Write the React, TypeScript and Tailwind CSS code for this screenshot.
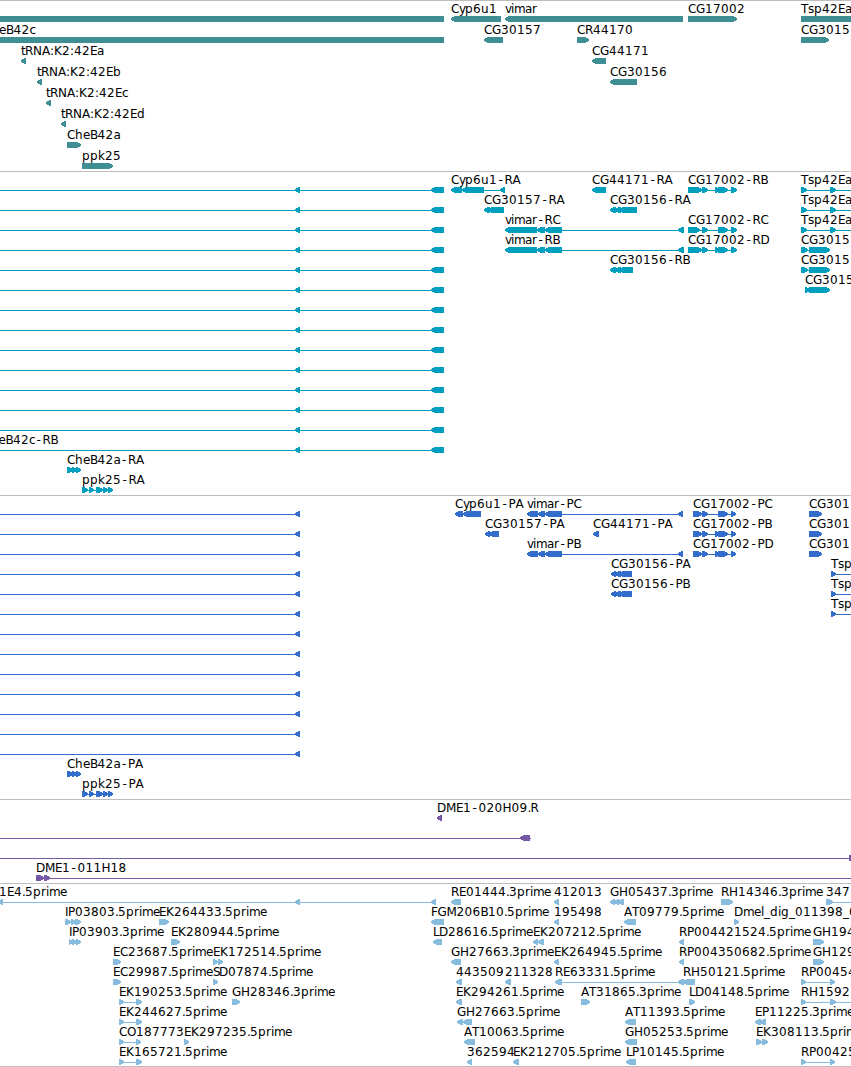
type Exon = [number, number];

type Feature = {
  row: number;
  label: string;
  dir: "l" | "r" | "none";
  exons: Exon[];
  // extent of the intron line, when there is one
  line?: Exon;
  labelX?: number;
};

type Track = {
  id: string;
  color: string;
  height: number;
  pitch: number;
  features: Feature[];
};

const WIDTH = 851;
const HEAD = 5;

// Advances for the 12px label font
const ADVANCE: Record<string, number> = {
  A: 8, B: 7.5, C: 8, D: 9, E: 7, F: 6.5, G: 9, H: 9, I: 3, K: 8, L: 6, M: 10,
  N: 9, O: 9, P: 7, R: 8, S: 6, T: 7, a: 7, b: 8, c: 6, d: 8, e: 7, g: 8,
  h: 8, i: 3, k: 7, l: 3, m: 11, p: 8, r: 5, s: 6, t: 4, u: 8, v: 6, y: 6,
  ".": 3, ":": 4, "-": 7.5, _: 6,
};

const f = (
  row: number,
  label: string,
  dir: Feature["dir"],
  exons: Exon[],
  line?: Exon,
  labelX?: number
): Feature => ({ row, label, dir, exons, line, labelX });

const rows = (count: number, make: (row: number) => Feature) =>
  Array.from({ length: count }, (_, i) => make(i));

const genes: Feature[] = [
  f(0, "", "none", [[0, 444]]),
  f(0, "Cyp6u1", "l", [[451, 501]]),
  f(0, "vimar", "l", [[505, 683]]),
  f(0, "CG17002", "r", [[688, 737]]),
  f(0, "Tsp42Ea", "none", [[801, 851]]),
  f(1, "eB42c", "none", [[0, 444]], undefined, -1),
  f(1, "CG30157", "l", [[484, 503]]),
  f(1, "CR44170", "r", [[577, 589]]),
  f(1, "CG3015", "r", [[801, 829]]),
  f(2, "tRNA:K2:42Ea", "l", [[21, 26]]),
  f(2, "CG44171", "l", [[592, 606]]),
  f(3, "tRNA:K2:42Eb", "l", [[37, 42]]),
  f(3, "CG30156", "l", [[610, 637]]),
  f(4, "tRNA:K2:42Ec", "l", [[46, 51]]),
  f(5, "tRNA:K2:42Ed", "l", [[61, 66]]),
  f(6, "CheB42a", "r", [[67, 81]]),
  f(7, "ppk25", "r", [[82, 113]]),
];

const cheExons: Exon[] = [[67, 73], [72, 77], [76, 81]];
const ppkExons: Exon[] = [[82, 88], [89, 94], [96, 101], [98, 103], [103, 108], [108, 113]];

const vimarRna: Exon[] = [[505, 537], [537, 545], [545, 562], [678, 684]];

const transcripts: Feature[] = [
  ...rows(14, (i) => f(i, i === 13 ? "eB42c-RB" : "", "l", [[295, 300], [431, 444]], [0, 444], -1.5)),
  f(14, "CheB42a-RA", "r", cheExons, [67, 81]),
  f(15, "ppk25-RA", "r", ppkExons, [82, 113]),
  f(0, "Cyp6u1-RA", "l", [[451, 462], [462, 484], [500, 505]], [451, 505]),
  f(0, "CG44171-RA", "l", [[592, 606]]),
  f(0, "CG17002-RB", "r", [[688, 702], [702, 708], [715, 720], [718, 728], [731, 737]], [688, 737]),
  f(0, "Tsp42Ea", "r", [[801, 807], [830, 836]], [801, 851]),
  f(1, "CG30157-RA", "l", [[484, 490], [488, 504]]),
  f(1, "CG30156-RA", "l", [[610, 616], [615, 621], [619, 637]]),
  f(1, "Tsp42Ea", "r", [[801, 807], [830, 836]], [801, 851]),
  f(2, "vimar-RC", "l", vimarRna, [505, 684]),
  f(2, "CG17002-RC", "r", [[688, 700], [702, 708], [718, 728], [731, 737]], [688, 737]),
  f(2, "Tsp42Ea", "r", [[801, 807], [830, 836]], [801, 851]),
  f(3, "vimar-RB", "l", vimarRna, [505, 684]),
  f(3, "CG17002-RD", "r", [[688, 702], [702, 708], [715, 720], [718, 728], [731, 737]], [688, 737]),
  f(3, "CG3015", "r", [[801, 808], [809, 830]], [801, 830]),
  f(4, "CG30156-RB", "l", [[610, 616], [615, 621], [619, 633]]),
  f(4, "CG3015", "r", [[801, 808], [809, 830]], [801, 830]),
  f(5, "CG3015", "r", [[805, 810], [809, 830]], [805, 830]),
];

const vimarCds: Exon[] = [[527, 538], [538, 545], [545, 562], [678, 683]];

const proteins: Feature[] = [
  ...rows(13, (i) => f(i, "", "l", [[295, 300]], [0, 300])),
  f(13, "CheB42a-PA", "r", cheExons, [67, 81]),
  f(14, "ppk25-PA", "r", ppkExons, [82, 113]),
  f(0, "Cyp6u1-PA", "l", [[455, 463], [463, 481]]),
  f(0, "vimar-PC", "l", vimarCds, [527, 683]),
  f(0, "CG17002-PC", "r", [[693, 702], [702, 708], [718, 728], [731, 736]], [693, 736]),
  f(0, "CG301", "r", [[809, 822]]),
  f(1, "CG30157-PA", "l", [[485, 490], [489, 499]]),
  f(1, "CG44171-PA", "l", [[593, 599]]),
  f(1, "CG17002-PB", "r", [[693, 702], [702, 708], [715, 720], [718, 728], [731, 736]], [693, 736]),
  f(1, "CG301", "r", [[809, 822]]),
  f(2, "vimar-PB", "l", vimarCds, [527, 683]),
  f(2, "CG17002-PD", "r", [[693, 702], [702, 708], [715, 720], [718, 728], [731, 736]], [693, 736]),
  f(2, "CG301", "r", [[809, 822]]),
  f(3, "CG30156-PA", "l", [[611, 616], [615, 621], [619, 632]]),
  f(4, "CG30156-PB", "l", [[611, 616], [615, 621], [619, 632]]),
  f(3, "Tsp", "r", [[831, 836]], [831, 851]),
  f(4, "Tsp", "r", [[831, 836]], [831, 851]),
  f(5, "Tsp", "r", [[831, 836]], [831, 851]),
];

const clones: Feature[] = [
  f(0, "DME1-020H09.R", "l", [[437, 442]]),
  f(1, "", "l", [[520, 530]], [0, 531]),
  f(2, "", "none", [[849, 851]], [0, 851]),
  f(3, "DME1-011H18", "r", [[36, 44], [44, 50]], [36, 851]),
];

const ests: Feature[] = [
  f(0, "1E4.5prime", "l", [[-2, 3], [295, 300], [431, 436]], [0, 436], -1),
  f(0, "RE01444.3prime", "l", [[451, 461]]),
  f(0, "412013", "l", [[554, 559]]),
  f(0, "GH05437.3prime", "l", [[610, 615], [614, 619], [618, 624]]),
  f(0, "RH14346.3prime", "r", [[721, 733]]),
  f(0, "347", "r", [[826, 833]], [826, 851]),
  f(1, "IP03803.5prime", "r", [[65, 71], [71, 76], [75, 81]]),
  f(1, "EK264433.5prime", "r", [[159, 169]]),
  f(1, "FGM206B10.5prime", "l", [[431, 444]]),
  f(1, "195498", "l", [[554, 559]]),
  f(1, "AT09779.5prime", "l", [[624, 636]]),
  f(1, "Dmel_dig_011398_0", "r", [[734, 739]]),
  f(2, "IP03903.3prime", "r", [[69, 73], [72, 77], [76, 81]]),
  f(2, "EK280944.5prime", "r", [[171, 180]]),
  f(2, "LD28616.5prime", "l", [[433, 442]]),
  f(2, "EK207212.5prime", "l", [[533, 538], [538, 544]]),
  f(2, "RP004421524.5prime", "l", [[679, 684]]),
  f(2, "GH194", "r", [[813, 824]]),
  f(3, "EC23687.5prime", "r", [[113, 121]]),
  f(3, "EK172514.5prime", "r", [[213, 218], [218, 223]]),
  f(3, "GH27663.3prime", "l", [[451, 461]]),
  f(3, "EK264945.5prime", "l", [[554, 559]]),
  f(3, "RP004350682.5prime", "l", [[679, 684]]),
  f(3, "GH129", "r", [[813, 824]]),
  f(4, "EC29987.5prime", "r", [[113, 121]]),
  f(4, "SD07874.5prime", "r", [[213, 218]]),
  f(4, "443509", "l", [[456, 462]]),
  f(4, "211328", "l", [[505, 511]]),
  f(4, "RE63331.5prime", "l", [[555, 562], [678, 684]], [555, 684]),
  f(4, "RH50121.5prime", "l", [[683, 695]]),
  f(4, "RP00454", "r", [[801, 806], [830, 835]], [801, 835]),
  f(5, "EK190253.5prime", "r", [[119, 124], [136, 142]], [119, 142]),
  f(5, "GH28346.3prime", "r", [[232, 240]]),
  f(5, "EK294261.5prime", "l", [[456, 462]]),
  f(5, "AT31865.3prime", "r", [[581, 590]]),
  f(5, "LD04148.5prime", "r", [[689, 695]]),
  f(5, "RH1592", "r", [[801, 806], [830, 836]], [801, 851]),
  f(6, "EK244627.5prime", "r", [[119, 124], [136, 142]], [119, 142]),
  f(6, "GH27663.5prime", "l", [[457, 463], [463, 472]]),
  f(6, "AT11393.5prime", "l", [[625, 636]]),
  f(6, "EP11225.3prime", "l", [[755, 761], [760, 766]]),
  f(7, "CO187773", "r", [[119, 124], [136, 141]], [119, 141]),
  f(7, "EK297235.5prime", "r", [[184, 189]]),
  f(7, "AT10063.5prime", "l", [[464, 475]]),
  f(7, "GH05253.5prime", "l", [[625, 637]]),
  f(7, "EK308113.5prim", "r", [[756, 762], [762, 768]]),
  f(8, "EK165721.5prime", "r", [[119, 124], [136, 142]], [119, 142]),
  f(8, "362594", "l", [[467, 472]]),
  f(8, "EK212705.5prime", "l", [[513, 519]]),
  f(8, "LP10145.5prime", "l", [[626, 636]]),
  f(8, "RP00425", "r", [[801, 806], [830, 835]], [801, 835]),
];

const tracks: Track[] = [
  { id: "genes", color: "#3e8e94", height: 170, pitch: 21, features: genes },
  { id: "transcripts", color: "#009ebf", height: 323, pitch: 20, features: transcripts },
  { id: "proteins", color: "#326dcc", height: 303, pitch: 20, features: proteins },
  { id: "clones", color: "#7558a6", height: 83, pitch: 20, features: clones },
  { id: "ests", color: "#87bcde", height: 182, pitch: 20, features: ests },
];

function glyphPositions(label: string, start: number) {
  let x = start;
  return label
    .split("")
    .map((ch) => {
      // the dash sits in the middle of its wide cell
      const at = ch === "-" ? x + 1.5 : x;
      x += ADVANCE[ch] ?? 8;
      return at;
    })
    .join(" ");
}

// Arrow heads have a blunt tip so that they stay visible on 5px exons
function exonPoints([a, b]: Exon, dir: Feature["dir"], y: number) {
  if (dir === "l") {
    return `${a},${y + 2} ${a + HEAD - 1},${y} ${b},${y} ${b},${y + 6} ${a + HEAD - 1},${y + 6} ${a},${y + 4}`;
  }
  if (dir === "r") {
    return `${a},${y} ${b - HEAD + 1},${y} ${b},${y + 2} ${b},${y + 4} ${b - HEAD + 1},${y + 6} ${a},${y + 6}`;
  }
  return `${a},${y} ${b},${y} ${b},${y + 6} ${a},${y + 6}`;
}

function FeatureGlyph({ feature, pitch }: { feature: Feature; pitch: number }) {
  const top = feature.row * pitch;
  const start = feature.labelX ?? feature.exons[0][0];

  return (
    <g>
      {feature.line && (
        <rect
          x={feature.line[0]}
          y={top + 18}
          width={feature.line[1] - feature.line[0]}
          height={1}
        />
      )}
      {feature.exons.map((exon, i) => (
        <polygon key={i} points={exonPoints(exon, feature.dir, top + 15)} />
      ))}
      {feature.label && (
        <text x={glyphPositions(feature.label, start)} y={top + 12} className="fill-black">
          {feature.label}
        </text>
      )}
    </g>
  );
}

function TrackPanel({ track }: { track: Track }) {
  return (
    <section className="border-t border-[#bebebe]">
      <svg
        width={WIDTH}
        height={track.height}
        fill={track.color}
        shapeRendering="crispEdges"
        className="block overflow-hidden font-['DejaVu_Sans',sans-serif] text-[12px]"
      >
        {track.features.map((feature, i) => (
          <FeatureGlyph key={i} feature={feature} pitch={track.pitch} />
        ))}
      </svg>
    </section>
  );
}

export default function App() {
  return (
    <main className="flex w-[851px] flex-col overflow-hidden border-b border-[#bebebe] bg-white">
      {tracks.map((track) => (
        <TrackPanel key={track.id} track={track} />
      ))}
    </main>
  );
}
